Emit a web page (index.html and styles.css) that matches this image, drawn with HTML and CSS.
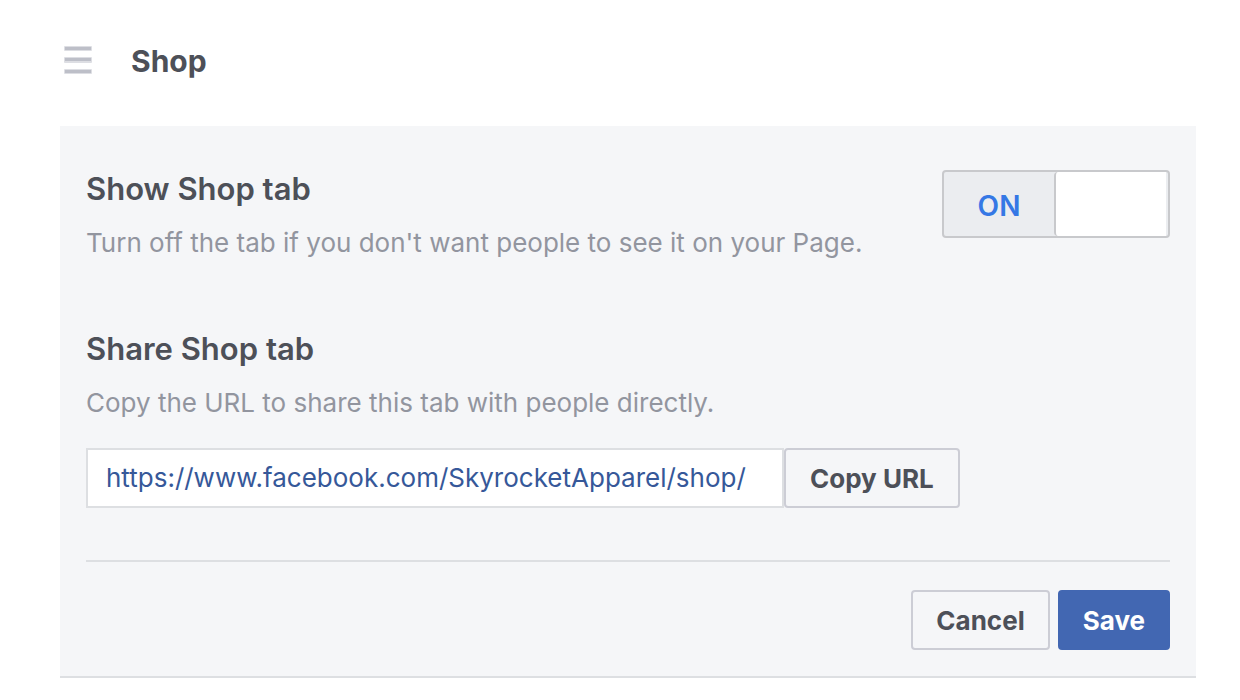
FILE: index.html
```html
<!DOCTYPE html>
<html lang="en">
<head>
<meta charset="utf-8">
<title>Shop</title>
<link rel="stylesheet" href="styles.css">
</head>
<body>
<main class="page">
  <header class="header">
    <svg class="grip" viewBox="0 0 28 28" aria-hidden="true">
      <g class="grip-edge">
        <rect y="0" width="28" height="5" rx="1"/>
        <rect y="11" width="28" height="6" rx="1"/>
        <rect y="23" width="28" height="5" rx="1"/>
      </g>
      <rect x="1" y="1" width="26" height="3"/>
      <rect x="1" y="12" width="26" height="3"/>
      <rect x="1" y="24" width="26" height="3"/>
    </svg>
    <h1 class="title">Shop</h1>
  </header>
  <form class="panel">
    <section class="setting">
      <div class="setting-text">
        <h2 class="heading" id="show-label">Show Shop tab</h2>
        <p class="hint">Turn off the tab if you don't want people to see it on your Page.</p>
      </div>
      <button class="switch" type="button" role="switch" aria-checked="true" aria-labelledby="show-label">
        <span class="switch-label">ON</span>
        <span class="switch-thumb"></span>
      </button>
    </section>
    <section class="share">
      <h2 class="heading">Share Shop tab</h2>
      <label class="hint" for="shop-url">Copy the URL to share this tab with people directly.</label>
      <div class="url-row">
        <input class="url" id="shop-url" type="text" readonly value="https://www.facebook.com/SkyrocketApparel/shop/">
        <button class="button copy" type="button">Copy URL</button>
      </div>
    </section>
    <footer class="actions">
      <button class="button" type="button">Cancel</button>
      <button class="button primary" type="submit">Save</button>
    </footer>
  </form>
</main>
</body>
</html>
```
FILE: styles.css
```css
* {
  box-sizing: border-box;
}

body {
  margin: 0;
  background: #fff;
  color: #4d5058;
  font-family: Inter, "Liberation Sans", sans-serif;
}

.page {
  padding: 0 44px 0 60px;
}

.header {
  display: flex;
  align-items: flex-start;
  gap: 39px;
  padding: 40px 4px 44px;
}

.grip {
  width: 28px;
  height: 28px;
  margin-top: 6px;
  fill: #bdbfc8;
}

.grip-edge {
  opacity: 0.5;
}

.title {
  margin: 0;
  font-size: 30px;
  font-weight: 700;
  line-height: 42px;
}

.panel {
  padding: 44px 26px 26px;
  background: #f5f6f8;
  border-bottom: 2px solid #dddfe2;
}

.setting {
  display: flex;
  align-items: flex-start;
  justify-content: space-between;
}

.heading {
  margin: 0 0 15px;
  font-size: 31px;
  font-weight: 600;
  line-height: 38px;
}

.hint {
  display: block;
  margin: 0;
  color: #92959f;
  font-size: 26px;
  line-height: 40px;
}

.switch {
  display: flex;
  flex: none;
  width: 228px;
  height: 68px;
  padding: 0 2px 0 0;
  background: #ebedf0;
  border: 2px solid #c8c9cc;
  border-radius: 4px;
  color: #3578e5;
  font: 600 28px/68px Inter, "Liberation Sans", sans-serif;
}

.switch-label,
.switch-thumb {
  flex: 1;
}

.switch-thumb {
  align-self: stretch;
  background: #fff;
  border-left: 2px solid #c8c9cc;
  border-radius: 4px 0 0 4px;
}

.share {
  padding: 67px 0 52px;
  border-bottom: 2px solid #dddfe2;
}

.url-row {
  display: flex;
  margin-top: 25px;
}

.url {
  width: 698px;
  height: 60px;
  padding: 0 18px 2px;
  background: #fff;
  border: 2px solid #dddfe2;
  color: #365899;
  font: 400 26px/40px Inter, "Liberation Sans", sans-serif;
}

.button {
  height: 60px;
  padding: 2px 23px 0;
  background: #f5f6f8;
  border: 2px solid #cccdd5;
  border-radius: 4px;
  color: #4d5058;
  font: 700 26px/40px Inter, "Liberation Sans", sans-serif;
  white-space: nowrap;
}

.copy {
  padding: 2px 24px 0;
}

.primary {
  background: #4267b2;
  border-color: #4267b2;
  color: #fff;
}

.actions {
  display: flex;
  justify-content: flex-end;
  gap: 8px;
  padding-top: 28px;
}
```
